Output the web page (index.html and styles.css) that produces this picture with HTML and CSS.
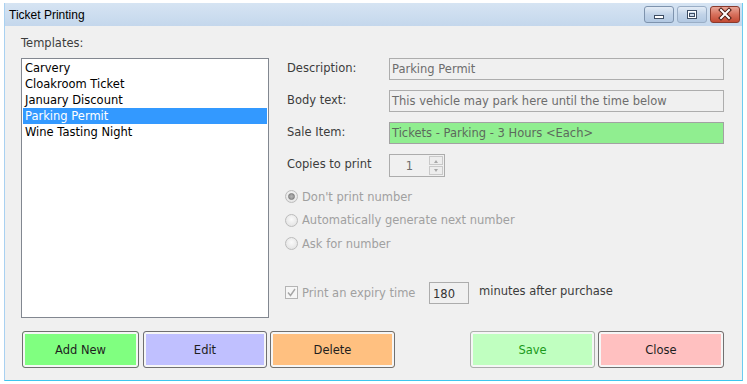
FILE: index.html
```html
<!DOCTYPE html>
<html lang="en">

<head>
    <meta charset="utf-8">
    <title>Ticket Printing</title>
    <link rel="stylesheet" href="styles.css">
</head>

<body>
    <div class="window">
        <div class="titlebar">
            <span class="title">Ticket Printing</span>
            <div class="caption-buttons">
                <span class="cap min">
                    <svg width="30" height="17" viewBox="0 0 30 17">
                        <rect x="10.5" y="9.5" width="9" height="3" fill="#fff" stroke="#3d4d63"/>
                    </svg>
                </span>
                <span class="cap max">
                    <svg width="30" height="17" viewBox="0 0 30 17">
                        <rect x="10.5" y="4.5" width="9" height="8" fill="none" stroke="#3d4d63"/>
                        <rect x="11.5" y="5.5" width="7" height="6" fill="none" stroke="#fff"/>
                        <rect x="12.5" y="7.5" width="5" height="3" fill="#c9d8ea" stroke="#3d4d63"/>
                    </svg>
                </span>
                <span class="cap close">
                    <svg width="30" height="17" viewBox="0 0 30 17">
                        <path d="M11 4 L19 12 M19 4 L11 12" stroke="#4b1b12" stroke-width="4" stroke-linecap="square"/>
                        <path d="M11 4 L19 12 M19 4 L11 12" stroke="#fff" stroke-width="2" stroke-linecap="square"/>
                    </svg>
                </span>
            </div>
        </div>

        <div class="content">
            <div class="main">
                <div class="left">
                    <div class="caption">Templates:</div>
                    <ul class="listbox">
                        <li>Carvery</li>
                        <li>Cloakroom Ticket</li>
                        <li>January Discount</li>
                        <li class="selected">Parking Permit</li>
                        <li>Wine Tasting Night</li>
                    </ul>
                </div>

                <div class="right">
                    <div class="form">
                        <label class="lbl">Description:</label>
                        <div class="field">Parking Permit</div>

                        <label class="lbl">Body text:</label>
                        <div class="field">This vehicle may park here until the time below</div>

                        <label class="lbl">Sale Item:</label>
                        <div class="field sale">Tickets - Parking - 3 Hours &lt;Each&gt;</div>

                        <label class="lbl">Copies to print</label>
                        <div class="spinner">
                            <span class="spin-value">1</span>
                            <span class="spin-buttons">
                                <span class="spin up"></span>
                                <span class="spin down"></span>
                            </span>
                        </div>
                    </div>

                    <div class="radios">
                        <div class="option"><span class="radio checked"></span>Don't print number</div>
                        <div class="option"><span class="radio"></span>Automatically generate next number</div>
                        <div class="option"><span class="radio"></span>Ask for number</div>
                    </div>

                    <div class="expiry">
                        <span class="check">
                            <svg width="11" height="11" viewBox="0 0 11 11">
                                <path d="M2 5.5 L4.5 8.5 L9 2" fill="none" stroke="#a6a6a6" stroke-width="1.4"/>
                            </svg>
                        </span>
                        <span class="check-text">Print an expiry time</span>
                        <span class="minutes">180</span>
                        <span class="after">minutes after purchase</span>
                    </div>
                </div>
            </div>

            <div class="buttons">
                <div class="group">
                    <button class="btn add">Add New</button>
                    <button class="btn edit">Edit</button>
                    <button class="btn delete">Delete</button>
                </div>
                <div class="group">
                    <button class="btn save">Save</button>
                    <button class="btn close-btn">Close</button>
                </div>
            </div>
        </div>
    </div>
</body>

</html>
```

FILE: styles.css
```css
body {
    margin: 0;
    background-color: white;
    font-family: "DejaVu Sans", sans-serif;
    font-size: 11.5px;
    color: #3c3c3c;
}

.window {
    margin: 3px 0 0 4px;
    width: 739px;
    height: 378px;
    box-sizing: border-box;
    border-left: 1px solid #a9d1f1;
    border-right: 1px solid #6ccbf0;
    border-bottom: 1px solid #3cc6ee;
    background-color: #f0f0f0;
}

/* TITLE BAR */

.titlebar {
    height: 23px;
    display: flex;
    align-items: center;
    padding-left: 4px;
    background: linear-gradient(#d6e4f3, #c4d7ec);
}

.title {
    font-family: "Liberation Sans", sans-serif;
    font-size: 12px;
    color: black;
}

.caption-buttons {
    margin-left: auto;
    margin-right: 2px;
    display: flex;
    gap: 3px;
    align-self: flex-start;
    margin-top: 3px;
}

.cap {
    width: 30px;
    height: 17px;
    box-sizing: border-box;
    border: 1px solid #7e93ad;
    border-radius: 3px;
    background: linear-gradient(#e3ecf6, #c1d3e8 50%, #b2c8e2);
    display: flex;
    align-items: center;
    justify-content: center;
    overflow: hidden;
}

.cap svg {
    flex: none;
}

.cap.max {
    border-color: #9aaec6;
}

.cap.close {
    border-color: #8a3a2c;
    background: linear-gradient(#e8a697, #d7705c 50%, #c34a33);
}

/* CONTENT */

.content {
    padding: 9px 18px 0 16px;
}

.main {
    display: flex;
    gap: 18px;
}

.left {
    width: 248px;
}

.caption {
    line-height: 16px;
    margin-bottom: 7px;
}

.listbox {
    list-style: none;
    margin: 0;
    padding: 1px;
    height: 260px;
    box-sizing: border-box;
    background-color: white;
    border: 1px solid #828790;
    color: black;
}

.listbox li {
    height: 16px;
    line-height: 16px;
    padding-left: 2px;
}

.listbox li.selected {
    background-color: #3399ff;
    color: white;
}

.right {
    flex: 1;
    padding-top: 23px;
}

.form {
    display: grid;
    grid-template-columns: 102px 1fr;
    row-gap: 10px;
}

.lbl {
    padding-top: 2px;
    line-height: 16px;
}

.field {
    height: 22px;
    box-sizing: border-box;
    border: 1px solid #adadad;
    padding-left: 2px;
    line-height: 20px;
    color: #6d6d6d;
}

.field.sale {
    background-color: #90ee90;
    border-color: #a2a2a2;
    color: #5c6a5c;
}

.spinner {
    width: 56px;
    height: 23px;
    box-sizing: border-box;
    border: 1px solid #acacac;
    display: flex;
    align-items: center;
}

.spin-value {
    flex: 1;
    text-align: center;
    color: #6d6d6d;
}

.spin-buttons {
    width: 14px;
    height: 19px;
    margin-right: 1px;
    display: flex;
    flex-direction: column;
    gap: 1px;
}

.spin {
    flex: 1;
    border: 1px solid #c9c9c9;
    background-color: #ededed;
    position: relative;
}

.spin::after {
    content: "";
    position: absolute;
    left: 4px;
    top: 3px;
    border-left: 2.5px solid transparent;
    border-right: 2.5px solid transparent;
}

.spin.up::after {
    border-bottom: 3px solid #a8a8a8;
}

.spin.down::after {
    top: 2px;
    border-top: 3px solid #a8a8a8;
}

/* RADIOS */

.radios {
    margin-top: 8px;
    color: #a0a0a0;
}

.option {
    height: 23.5px;
    display: flex;
    align-items: center;
    gap: 4px;
    margin-left: -2px;
}

.radio {
    width: 11px;
    height: 11px;
    border: 1px solid #bcbcbc;
    border-radius: 50%;
    background: radial-gradient(circle at 50% 40%, #fafafa, #dedede);
    position: relative;
}

.radio.checked::after {
    content: "";
    position: absolute;
    left: 2px;
    top: 2px;
    width: 5px;
    height: 5px;
    border-radius: 50%;
    border: 1px solid #7d7d7d;
    background: radial-gradient(#b4b4b4, #8c8c8c);
}

/* EXPIRY */

.expiry {
    margin-top: 26px;
    margin-left: -2px;
    display: flex;
    align-items: center;
    height: 22px;
}

.check {
    width: 11px;
    height: 11px;
    border: 1px solid #b4b4b4;
    background-color: #f6f6f6;
    display: flex;
}

.check-text {
    margin-left: 4px;
    width: 127px;
    color: #a0a0a0;
}

.minutes {
    width: 40px;
    height: 22px;
    box-sizing: border-box;
    border: 1px solid #acacac;
    padding: 2px 0 0 3px;
    line-height: 18px;
    color: #333;
}

.after {
    margin-left: 10px;
    margin-top: -3px;
}

/* KNAPPER */

.buttons {
    margin-top: 13px;
    margin-left: 1px;
    display: flex;
    justify-content: space-between;
}

.group {
    display: flex;
    gap: 3px;
}

.btn {
    height: 37px;
    width: 125px;
    border: 1px solid #707070;
    border-radius: 3px;
    box-shadow: inset 0 0 0 2px #f6f6f6;
    font-family: "DejaVu Sans", sans-serif;
    font-size: 11.5px;
    color: #1e1e1e;
    cursor: pointer;
}

.btn.add {
    width: 117px;
    margin-right: 1px;
    background-color: #80ff80;
}

.btn.edit {
    width: 124px;
    background-color: #c0c0ff;
}

.btn.delete {
    background-color: #ffc080;
}

.btn.save {
    border-color: #adadad;
    background-color: #c0ffc0;
    color: #1b9a1b;
}

.btn.close-btn {
    width: 126px;
    background-color: #ffc0c0;
}
```
